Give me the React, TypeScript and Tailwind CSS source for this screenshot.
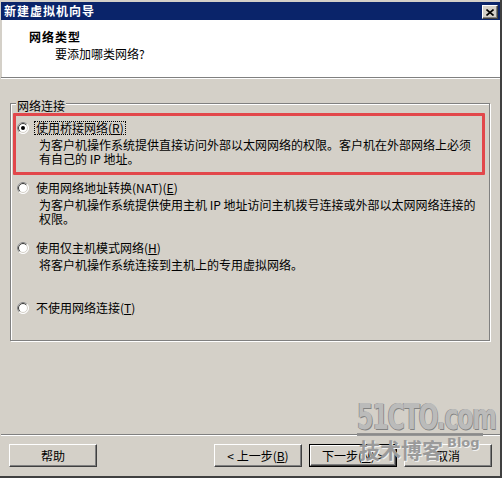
import React from "react";

type Opt = {
  label: string;
  key: string;
  desc: string[];
  checked?: boolean;
};

const options: Opt[] = [
  {
    label: "使用桥接网络",
    key: "R",
    desc: [
      "为客户机操作系统提供直接访问外部以太网网络的权限。客户机在外部网络上必须",
      "有自己的 IP 地址。",
    ],
    checked: true,
  },
  {
    label: "使用网络地址转换(NAT)",
    key: "E",
    desc: [
      "为客户机操作系统提供使用主机 IP 地址访问主机拨号连接或外部以太网网络连接的",
      "权限。",
    ],
  },
  {
    label: "使用仅主机模式网络",
    key: "H",
    desc: ["将客户机操作系统连接到主机上的专用虚拟网络。"],
  },
  { label: "不使用网络连接", key: "T", desc: [] },
];

function Radio({ checked }: { checked?: boolean }) {
  return (
    <svg width="12" height="12" viewBox="0 0 12 12" className="shrink-0">
      <circle cx="6" cy="6" r="5.5" fill="#fff" stroke="#ffffff" />
      <path d="M2.1 9.9 A5.5 5.5 0 0 1 9.9 2.1" fill="none" stroke="#808080" />
      <circle cx="6" cy="6" r="4.5" fill="#fff" stroke="#d4d0c8" />
      <path d="M2.8 9.2 A4.5 4.5 0 0 1 9.2 2.8" fill="none" stroke="#404040" />
      {checked && <circle cx="6" cy="6" r="2" fill="#000" />}
    </svg>
  );
}

function Button({
  children,
  isDefault,
}: {
  children: React.ReactNode;
  isDefault?: boolean;
}) {
  return (
    <div
      className={
        isDefault
          ? "w-[88px] h-[23px] border border-black flex"
          : "w-[88px] h-[23px] flex"
      }
    >
      <div className="flex-1 flex items-center justify-center border-t border-l border-t-white border-l-white border-r border-b border-r-[#404040] border-b-[#404040] shadow-[inset_-1px_-1px_0_#808080]">
        {children}
      </div>
    </div>
  );
}

export default function App() {
  return (
    <div className="relative w-[502px] h-[478px] bg-[#d4d0c8] flex flex-col pt-[2px] pl-[1px] border-r-2 border-b-2 border-r-[#404040] border-b-[#404040] overflow-hidden text-[12px] leading-[14px] text-black font-['Noto_Sans_CJK_SC','Noto_Sans_CJK_JP',sans-serif]">
      {/* title bar */}
      <div className="h-[18px] bg-[#0a246a] flex items-start justify-between pl-[3px] pr-[2px]">
        <span className="text-white font-bold leading-[18px] tracking-[1px]">
          新建虚拟机向导
        </span>
        <div className="mt-[3px] w-[16px] h-[14px] bg-[#d4d0c8] border-t border-l border-t-white border-l-white border-r border-b border-r-[#404040] border-b-[#404040] flex items-center justify-center shadow-[inset_-1px_-1px_0_#808080]">
          <svg width="8" height="7" viewBox="0 0 8 7">
            <path d="M0.5 0.5 L7.5 6.5 M7.5 0.5 L0.5 6.5" stroke="#000" strokeWidth="1.6" />
          </svg>
        </div>
      </div>

      {/* header */}
      <div className="h-[57px] bg-white flex flex-col pt-[10px] border-l border-l-[#d4d0c8]">
        <div className="pl-[27px] font-bold tracking-[1px]">网络类型</div>
        <div className="pl-[53px] mt-[3px]">要添加哪类网络?</div>
      </div>
      <div className="h-px bg-[#808080]" />
      <div className="h-px bg-white" />

      {/* body */}
      <div className="flex-1 flex flex-col pt-[24px] pl-[9px]">
        <div className="relative w-[480px] h-[238px] border border-[#808080] shadow-[inset_1px_1px_0_#fff,1px_1px_0_#fff] pt-[17px] pl-[6px]">
          <span className="absolute left-[5px] top-[-5px] px-px bg-[#d4d0c8]">
            网络连接
          </span>
          {options.map((o, i) => (
            <div key={i} className="h-[60px] flex flex-col">
              <div className="h-[14px] flex items-center gap-[5px]">
                <Radio checked={o.checked} />
                <span
                  className={
                    o.checked
                      ? "border border-dotted border-black px-px leading-[12px]"
                      : "border border-transparent px-px leading-[12px]"
                  }
                >
                  {o.label}(<span className="underline">{o.key}</span>)
                </span>
              </div>
              <div className="mt-[3px] pl-[22px] flex flex-col">
                {o.desc.map((d, j) => (
                  <div key={j} className="whitespace-nowrap">
                    {d}
                  </div>
                ))}
              </div>
            </div>
          ))}
          {/* red annotation box */}
          <div className="absolute left-[2px] top-[9px] w-[472px] h-[62px] border-[3px] border-[#e2474b] rounded-[1px]" />
        </div>
      </div>

      <div className="h-px bg-[#808080]" />
      <div className="h-px bg-white" />

      {/* buttons */}
      <div className="h-[40px] flex items-start pt-[8px] pl-[8px]">
        <Button>帮助</Button>
        <div className="w-[117px]" />
        <Button>
          &lt; 上一步(<span className="underline">B</span>)
        </Button>
        <div className="w-[7px]" />
        <Button isDefault>
          下一步(<span className="underline">N</span>) &gt;
        </Button>
        <div className="w-[7px]" />
        <Button>取消</Button>
      </div>

      {/* watermark */}
      <div className="absolute left-[357px] top-[401px] w-[128px] flex flex-col items-start opacity-90 pointer-events-none">
        <span className="inline-block origin-left scale-x-[0.68] whitespace-nowrap text-[35px] leading-[32px] font-bold font-['DejaVu_Sans',sans-serif] tracking-[-2px] text-[#b9b9b9] [text-shadow:1px_1px_0_#7a7a7a,-1px_0_0_#8a8a8a]">
          51CTO.com
        </span>
        <div className="w-[126px] h-[3px] bg-[#8c8c8c]" />
      </div>
      <div className="absolute left-[359px] top-[437px] flex items-start pointer-events-none">
        <span className="text-[21px] leading-[24px] font-bold text-[#9a9a9a] [text-shadow:1px_1px_0_#f0f0f0]">
          技术博客
        </span>
        <span className="ml-[4px] -mt-[1px] text-[13px] leading-[14px] font-bold font-['DejaVu_Sans',sans-serif] text-[#9a9a9a] [text-shadow:1px_1px_0_#f0f0f0]">
          Blog
        </span>
      </div>
    </div>
  );
}
